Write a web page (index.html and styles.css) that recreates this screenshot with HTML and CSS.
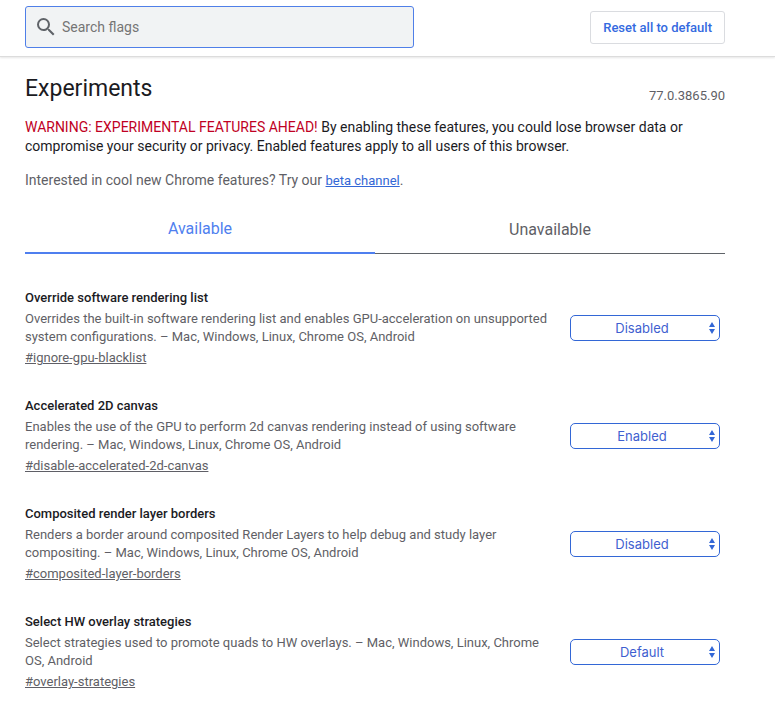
FILE: index.html
```html
<!DOCTYPE html>
<html lang="en">
<head>
<meta charset="utf-8">
<title>Experiments</title>
<link rel="stylesheet" href="styles.css">
</head>
<body>
<header class="topbar">
  <div class="search">
    <svg class="search-icon" viewBox="0 0 24 24" aria-hidden="true"><path d="M15.5 14h-.79l-.28-.27A6.47 6.47 0 0 0 16 9.5 6.5 6.5 0 1 0 9.5 16c1.61 0 3.09-.59 4.23-1.57l.27.28v.79l5 4.99L20.49 19l-4.99-5zm-6 0C7.01 14 5 11.99 5 9.5S7.01 5 9.5 5 14 7.01 14 9.5 11.99 14 9.5 14z"/></svg>
    <input class="search-input" type="text" placeholder="Search flags" aria-label="Search flags">
  </div>
  <button class="reset" type="button">Reset all to default</button>
</header>
<main class="content">
  <div class="heading">
    <h1 class="title">Experiments</h1>
    <span class="version">77.0.3865.90</span>
  </div>
  <p class="warning"><span class="alert">WARNING: EXPERIMENTAL FEATURES AHEAD!</span> By enabling these features, you could lose browser data or compromise your security or privacy. Enabled features apply to all users of this browser.</p>
  <p class="promo">Interested in cool new Chrome features? Try our <a href="#beta">beta channel</a>.</p>
  <div class="tabs" role="tablist">
    <button class="tab tab-selected" type="button" role="tab" aria-selected="true">Available</button>
    <button class="tab" type="button" role="tab" aria-selected="false">Unavailable</button>
  </div>
  <section class="flags">
    <article class="flag">
      <div class="flag-text">
        <h2 class="flag-name"><label for="f1">Override software rendering list</label></h2>
        <p class="flag-desc">Overrides the built-in software rendering list and enables GPU-acceleration on unsupported system configurations. – Mac, Windows, Linux, Chrome OS, Android</p>
        <a class="flag-link" href="#ignore-gpu-blacklist">#ignore-gpu-blacklist</a>
      </div>
      <div class="picker">
        <select id="f1" class="select"><option>Disabled</option><option>Enabled</option></select>
        <svg class="arrows" viewBox="0 0 6 12" aria-hidden="true"><path d="M3 0l3 5H0zM3 12L0 7h6z"/></svg>
      </div>
    </article>
    <article class="flag">
      <div class="flag-text">
        <h2 class="flag-name"><label for="f2">Accelerated 2D canvas</label></h2>
        <p class="flag-desc">Enables the use of the GPU to perform 2d canvas rendering instead of using software rendering. – Mac, Windows, Linux, Chrome OS, Android</p>
        <a class="flag-link" href="#disable-accelerated-2d-canvas">#disable-accelerated-2d-canvas</a>
      </div>
      <div class="picker">
        <select id="f2" class="select"><option>Enabled</option><option>Disabled</option></select>
        <svg class="arrows" viewBox="0 0 6 12" aria-hidden="true"><path d="M3 0l3 5H0zM3 12L0 7h6z"/></svg>
      </div>
    </article>
    <article class="flag">
      <div class="flag-text">
        <h2 class="flag-name"><label for="f3">Composited render layer borders</label></h2>
        <p class="flag-desc">Renders a border around composited Render Layers to help debug and study layer compositing. – Mac, Windows, Linux, Chrome OS, Android</p>
        <a class="flag-link" href="#composited-layer-borders">#composited-layer-borders</a>
      </div>
      <div class="picker">
        <select id="f3" class="select"><option>Disabled</option><option>Enabled</option></select>
        <svg class="arrows" viewBox="0 0 6 12" aria-hidden="true"><path d="M3 0l3 5H0zM3 12L0 7h6z"/></svg>
      </div>
    </article>
    <article class="flag">
      <div class="flag-text">
        <h2 class="flag-name"><label for="f4">Select HW overlay strategies</label></h2>
        <p class="flag-desc">Select strategies used to promote quads to HW overlays. – Mac, Windows, Linux, Chrome OS, Android</p>
        <a class="flag-link" href="#overlay-strategies">#overlay-strategies</a>
      </div>
      <div class="picker">
        <select id="f4" class="select"><option>Default</option><option>Enabled</option><option>Disabled</option></select>
        <svg class="arrows" viewBox="0 0 6 12" aria-hidden="true"><path d="M3 0l3 5H0zM3 12L0 7h6z"/></svg>
      </div>
    </article>
  </section>
</main>
</body>
</html>
```
FILE: styles.css
```css
* {
  box-sizing: border-box;
}

body {
  margin: 0;
  background: #fff;
  color: #1b1b1f;
  font-family: Roboto, "Liberation Sans", sans-serif;
  font-size: 13px;
}

h1, h2, p {
  margin: 0;
  font-weight: 400;
}

button, input, select {
  font-family: inherit;
}

.topbar {
  display: flex;
  justify-content: space-between;
  align-items: center;
  padding: 6px 50px 8px 25px;
  border-bottom: 1px solid #dcdcdc;
  box-shadow: 0 1px 2px rgba(0, 0, 0, 0.1);
}

.search {
  display: flex;
  align-items: center;
  flex: 0 1 389px;
  height: 42px;
  padding: 0 8px;
  background: #f1f3f4;
  border: 1px solid #4f7fe8;
  border-radius: 3px;
}

.search-icon {
  flex: none;
  width: 24px;
  height: 24px;
  fill: #5f6368;
}

.search-input {
  flex: 1;
  min-width: 0;
  margin-left: 4px;
  padding: 0;
  border: 0;
  outline: 0;
  background: transparent;
  color: #202124;
  font-size: 14px;
}

.search-input::placeholder {
  color: #757575;
}

.reset {
  height: 33px;
  padding: 0 12px;
  background: #fff;
  border: 1px solid #dadce0;
  border-radius: 3px;
  color: #346ae0;
  font-size: 13px;
  font-weight: 500;
}

.content {
  padding: 16px 50px 24px 25px;
}

.heading {
  display: flex;
  justify-content: space-between;
  align-items: flex-end;
  margin-bottom: 14px;
}

.title {
  font-size: 23px;
  line-height: 31px;
}

.version {
  color: #5f5f66;
  font-size: 13px;
  line-height: 16px;
}

.warning {
  font-size: 14px;
  line-height: 19px;
}

.alert {
  color: #c00023;
}

.promo {
  margin-top: 15px;
  color: #5f5f66;
  font-size: 14px;
  line-height: 19px;
}

.promo a {
  color: #3367d6;
  font-size: 13px;
}

.tabs {
  display: flex;
  margin-top: 15px;
}

.tab {
  flex: 1;
  height: 49px;
  padding: 0;
  background: none;
  border: 0;
  border-bottom: 1px solid #5f6368;
  color: #5f5f66;
  font-size: 16px;
}

.tab-selected {
  border-bottom: 2px solid #4f7fef;
  color: #4f7fef;
}

.flags {
  display: flex;
  flex-direction: column;
  gap: 28px;
  margin-top: 34px;
}

.flag {
  display: flex;
  justify-content: space-between;
  align-items: center;
  gap: 20px;
  padding-right: 5px;
}

.flag-text {
  flex: 1;
}

.flag-name {
  font-size: 13px;
  font-weight: 500;
  line-height: 20px;
}

.flag-desc {
  margin: 2px 0;
  color: #5f5f66;
  line-height: 18px;
}

.flag-link {
  display: inline-block;
  color: #5f5f66;
  line-height: 20px;
}

.picker {
  position: relative;
  flex: none;
  width: 150px;
}

.select {
  width: 100%;
  height: 26px;
  padding: 0 12px 0 6px;
  appearance: none;
  background: #fff;
  border: 1px solid #3367d6;
  border-radius: 5px;
  color: #3f5fd0;
  font-family: Inter, Roboto, sans-serif;
  font-size: 13px;
  text-align: center;
  text-align-last: center;
}

.arrows {
  position: absolute;
  top: 7px;
  right: 5px;
  width: 6px;
  height: 12px;
  fill: #3367d6;
  pointer-events: none;
}
```
